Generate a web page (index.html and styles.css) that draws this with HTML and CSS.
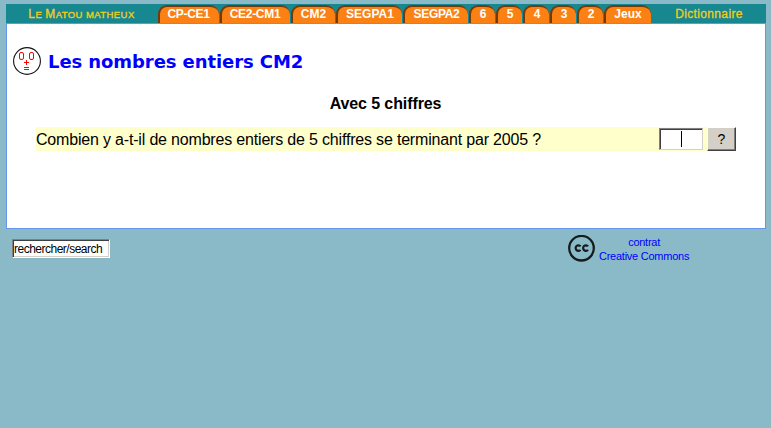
FILE: index.html
```html
<!DOCTYPE html>
<html lang="fr">
<head>
<meta charset="utf-8">
<title>Les nombres entiers CM2</title>
<link rel="stylesheet" href="styles.css">
</head>
<body>
<nav class="bar">
  <a class="brand"><b>L</b>e <b>M</b>atou matheux</a>
  <a class="tab w-cp">CP-CE1</a>
  <a class="tab w-ce">CE2-CM1</a>
  <a class="tab w-cm">CM2</a>
  <a class="tab w-s1">SEGPA1</a>
  <a class="tab w-s2">SEGPA2</a>
  <a class="tab">6</a>
  <a class="tab">5</a>
  <a class="tab">4</a>
  <a class="tab">3</a>
  <a class="tab">2</a>
  <a class="tab w-jx">Jeux</a>
  <a class="dico">Dictionnaire</a>
</nav>
<main class="page">
  <header class="head">
    <svg class="face" width="28" height="28" viewBox="0 0 28 28">
      <circle cx="14" cy="14" r="13.4" fill="#fff" stroke="#111" stroke-width="1.1"/>
      <g fill="none" stroke="#f00" stroke-width="1">
        <rect x="6.5" y="5.500" width="4" height="7" rx="1.5"/>
        <rect x="16.5" y="5.500" width="4" height="7" rx="1.5"/>
        <path d="M11 15.500h5M13.500 13v5M11 20.500h5M11 22.500h5"/>
      </g>
    </svg>
    <h1>Les nombres entiers CM2</h1>
  </header>
  <h2>Avec 5 chiffres</h2>
  <div class="row">
    <p class="question">Combien y a-t-il de nombres entiers de 5 chiffres se terminant par 2005 ?</p>
    <div class="answer"><i class="caret"></i></div>
    <button class="check">?</button>
  </div>
</main>
<footer class="foot">
  <div class="search">rechercher/search</div>
  <div class="licence">
    <svg width="28" height="28" viewBox="0 0 28 28">
      <circle cx="13.500" cy="13.200" r="12.300" fill="none" stroke="#161c1c" stroke-width="2.300"/>
      <g fill="none" stroke="#161c1c" stroke-width="2.200">
        <path d="M12.500 11.400a2.700 2.800 0 1 0 0 3.400M20 11.400a2.700 2.800 0 1 0 0 3.400"/>
      </g>
    </svg>
    <a>contrat<br>Creative Commons</a>
  </div>
</footer>
</body>
</html>
```
FILE: styles.css
```css
* { box-sizing: border-box; }
body {
  margin: 0;
  padding: 4px 5px 0 6px;
  background: #8abac8;
  font-family: "Liberation Sans", Arial, sans-serif;
  color: #000;
}
.bar {
  display: flex;
  gap: 1px;
  height: 19px;
  background: #178790;
  font-size: 12px;
  line-height: 18px;
  font-weight: bold;
  text-align: center;
}
.brand {
  width: 151px;
  font-size: 9.5px;
  font-weight: normal;
  text-transform: uppercase;
  color: #f2cd1c;
  line-height: 20px;
  letter-spacing: 0.42px;
  -webkit-text-stroke: 0.35px #f2cd1c;
}
.brand b {
  font-size: 12px;
  font-weight: normal;
}
.tab {
  width: 26px;
  height: 18px;
  margin-top: 1px;
  border-top: 2px solid #733a0a;
  border-left: 2px solid #733a0a;
  border-radius: 9px 9px 0 0;
  background: #fb8114;
  color: #fff;
  line-height: 14px;
}
.w-cp { width: 61px; padding-right: 2px; letter-spacing: -0.3px; }
.w-ce { width: 70px; padding-right: 2px; letter-spacing: -0.3px; }
.w-cm { width: 44px; padding-right: 1px; }
.w-s1 { width: 66px; }
.w-s2 { width: 65px; letter-spacing: -0.3px; }
.w-jx { width: 47px; padding-right: 1px; }
.dico {
  width: 114px;
  font-weight: normal;
  color: #f2cd1c;
  line-height: 20px;
  letter-spacing: 0.35px;
  -webkit-text-stroke: 0.3px #f2cd1c;
}
.page {
  height: 206px;
  padding: 23px 29px 0 6px;
  border: 1px solid #6495ed;
  background: #fff;
}
.head {
  display: flex;
  align-items: center;
  gap: 7px;
  height: 28px;
}
h1 {
  margin: 2px 0 0;
  font: bold 18px/24px "DejaVu Sans", Verdana, sans-serif;
  letter-spacing: -0.08px;
  color: #00f;
}
h2 {
  margin: 20px 0 0 22px;
  font-size: 16px;
  line-height: 18px;
  letter-spacing: -0.1px;
  text-align: center;
}
.row {
  display: flex;
  align-items: center;
  width: 700px;
  height: 24px;
  margin: 14px 0 0 23px;
  background: linear-gradient(90deg, #ffffcb 671px, #fff 671px);
}
.question {
  width: 623px;
  margin: 2px 0 0;
  font-size: 16px;
  line-height: 24px;
  letter-spacing: -0.182px;
  white-space: nowrap;
}
.answer {
  width: 44px;
  height: 22px;
  margin-right: 4px;
  padding: 1px 0 0 20px;
  border: 1px solid;
  border-color: #808080 #d4d0c8 #d4d0c8 #808080;
  box-shadow: inset 1px 1px #404040;
  background: #fff;
}
.caret {
  display: block;
  width: 1px;
  height: 16px;
  margin: 1px 0 0 1px;
  background: #000;
}
.check {
  width: 29px;
  height: 24px;
  padding: 0;
  border: 1px solid;
  border-color: #fff #404040 #404040 #fff;
  box-shadow: inset -1px -1px #808080;
  background: #d4d0c8;
  font: 14px "Liberation Sans", sans-serif;
}
.foot {
  display: flex;
  padding: 6px 0 0 6px;
}
.search {
  width: 98px;
  height: 19px;
  margin-top: 4px;
  padding: 0 1px;
  border: 1px solid;
  border-color: #808080 #fff #fff #808080;
  box-shadow: inset 1px 1px #404040, inset -1px -1px #d4d0c8;
  background: #fff;
  font-size: 12px;
  line-height: 18px;
  letter-spacing: -0.5px;
  white-space: nowrap;
}
.licence {
  display: flex;
  align-items: flex-start;
  gap: 3px;
  margin-left: 458px;
  font-size: 11px;
  line-height: 14px;
  letter-spacing: -0.25px;
  text-align: center;
  color: #00f;
}
.licence a { white-space: nowrap; }
```
